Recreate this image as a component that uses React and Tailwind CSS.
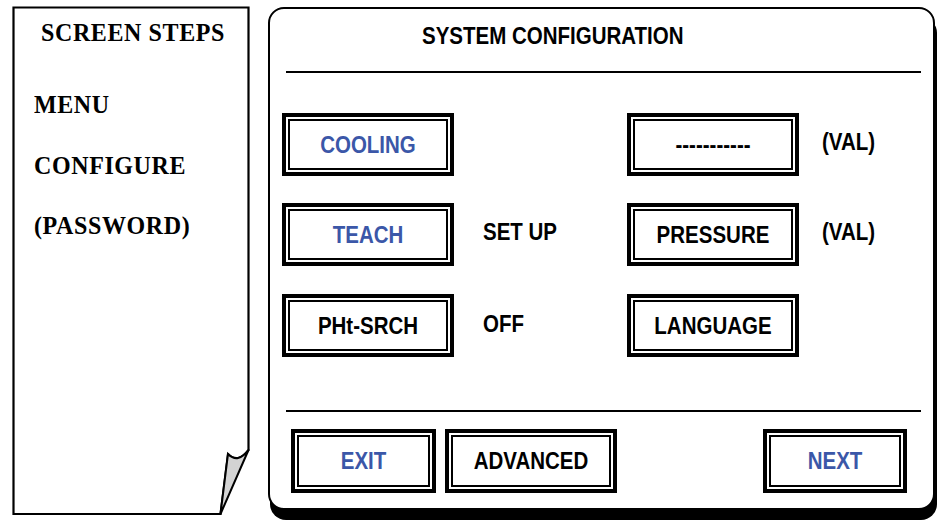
import React from "react";

const sans = { fontFamily: '"Liberation Sans", Arial, sans-serif' };
const serif = { fontFamily: '"Liberation Serif", "Times New Roman", serif' };

function Btn({ children, w = "w-[172px]", h = "h-[63px]", blue = false }) {
  return (
    <div className={`${w} ${h} shrink-0 border-4 border-black p-[2px] bg-white`}>
      <div className="w-full h-full border-2 border-black flex items-center justify-center">
        <span
          className={`inline-block scale-y-[1.18] text-[20.5px] font-bold leading-[24px] ${blue ? "text-[#3b57a8]" : "text-black"}`}
        >
          {children}
        </span>
      </div>
    </div>
  );
}

function Label({ children, className = "" }) {
  return (
    <span className={`inline-block scale-y-[1.18] text-[20.5px] font-bold leading-[24px] text-black ${className}`}>
      {children}
    </span>
  );
}

export default function App() {
  return (
    <div className="w-[939px] h-[521px] bg-white flex overflow-hidden" style={sans}>
      {/* Left page panel */}
      <div className="relative ml-[12px] mt-[6px] w-[240px] h-[512px] shrink-0" style={serif}>
        <svg className="absolute inset-0" width="240" height="512" viewBox="0 0 240 512">
          <path
            d="M1.5 1.5 H236.5 V444 Q226 458 216 448 L208.5 508 H1.5 Z"
            fill="#fff"
            stroke="#000"
            strokeWidth="2.2"
            strokeLinejoin="miter"
          />
          <path
            d="M216 448 Q226 458 236.5 444 L208.5 508 Z"
            fill="#d3d3d3"
            stroke="#000"
            strokeWidth="2"
            strokeLinejoin="round"
          />
        </svg>
        <div className="relative flex flex-col text-[24px] font-bold leading-[30px] tracking-[0.6px] text-black">
          <div className="mt-[11.5px] text-center pl-[2px]">
            <span className="inline-block scale-y-[1.06]">SCREEN STEPS</span>
          </div>
          <div className="mt-[42.5px] pl-[22px]">
            <span className="inline-block scale-y-[1.06]">MENU</span>
          </div>
          <div className="mt-[30.5px] pl-[22px]">
            <span className="inline-block scale-y-[1.06]">CONFIGURE</span>
          </div>
          <div className="mt-[30.5px] pl-[22px]">
            <span className="inline-block scale-y-[1.06]">(PASSWORD)</span>
          </div>
        </div>
      </div>

      {/* Right configuration panel */}
      <div className="ml-[16px] mt-[7px] w-[667px] h-[503px] shrink-0 border-2 border-black rounded-[16px] bg-white shadow-[2px_10px_0_#000] flex flex-col">
        <div className="mt-[14.5px] h-[24px] flex pl-[152px]">
          <span className="inline-block scale-y-[1.14] text-[20.5px] font-bold leading-[24px] text-black">
            SYSTEM CONFIGURATION
          </span>
        </div>
        <div className="mt-[23.5px] ml-[16px] mr-[12px] h-[2px] bg-black" />

        <div className="mt-[40px] flex flex-col">
          <div className="flex items-center h-[63px] pl-[12px]">
            <Btn blue>COOLING</Btn>
            <div className="w-[173px]" />
            <Btn>-----------</Btn>
            <Label className="ml-[23px] mb-[5px]">(VAL)</Label>
          </div>
          <div className="flex items-center h-[63px] pl-[12px] mt-[27px]">
            <Btn blue>TEACH</Btn>
            <div className="w-[173px] pl-[29px] mb-[4px]">
              <Label>SET UP</Label>
            </div>
            <Btn>PRESSURE</Btn>
            <Label className="ml-[23px] mb-[5px]">(VAL)</Label>
          </div>
          <div className="flex items-center h-[63px] pl-[12px] mt-[28px]">
            <Btn>PHt-SRCH</Btn>
            <div className="w-[173px] pl-[29px] mb-[2px]">
              <Label>OFF</Label>
            </div>
            <Btn>LANGUAGE</Btn>
          </div>
        </div>

        <div className="mt-[53px] ml-[16px] mr-[12px] h-[2px] bg-black" />

        <div className="mt-[17px] flex items-center pl-[21px]">
          <Btn w="w-[145px]" h="h-[64px]" blue>EXIT</Btn>
          <div className="ml-[9px]">
            <Btn w="w-[172px]" h="h-[64px]">ADVANCED</Btn>
          </div>
          <div className="ml-[146px]">
            <Btn w="w-[144px]" h="h-[64px]" blue>NEXT</Btn>
          </div>
        </div>
      </div>
    </div>
  );
}
